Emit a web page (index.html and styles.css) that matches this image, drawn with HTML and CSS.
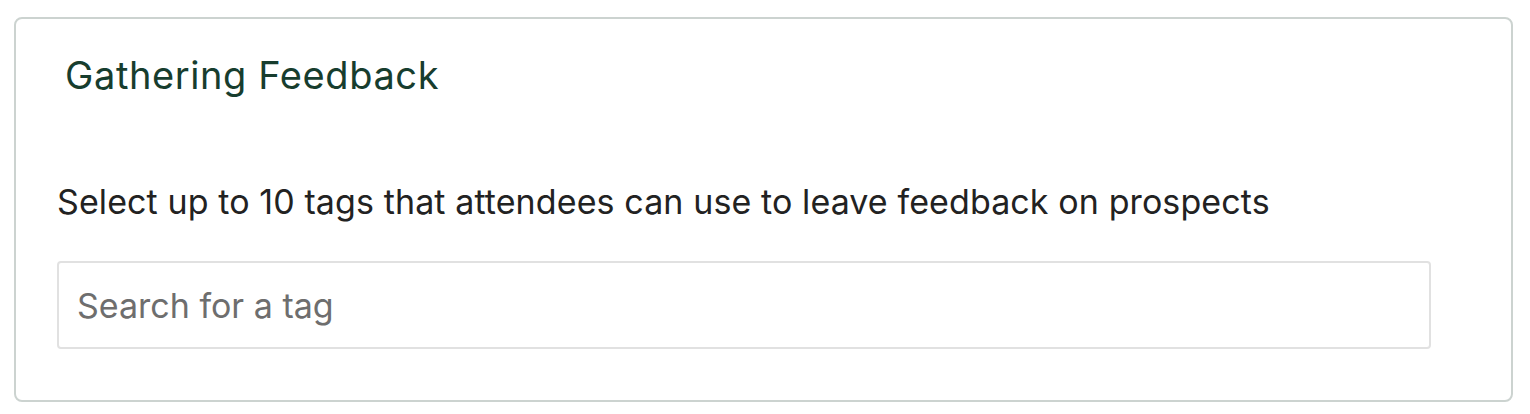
FILE: index.html
```html
<!DOCTYPE html>
<html lang="en">
  <head>
    <meta charset="UTF-8" />
    <meta name="viewport" content="width=device-width, initial-scale=1.0" />
    <title>Gathering Feedback</title>
    <link rel="stylesheet" href="styles.css">
  </head>
  <body>
    <div class="feedbackCard">
      <h2 class="feedbackTitle">Gathering Feedback</h2>
      <p class="feedbackHint">Select up to 10 tags that attendees can use to leave feedback on prospects</p>
      <input type="text" class="tagSearch" placeholder="Search for a tag" />
    </div>
  </body>
</html>
```

FILE: styles.css
```css
body {
  margin: 0;
  padding: 17px 17px 0 14px;
  background-color: #ffffff;
  font-family: Inter, "Liberation Sans", sans-serif;
}
.feedbackCard {
  height: 385px;
  box-sizing: border-box;
  border: 2px solid #ccd3d0;
  border-radius: 8px;
  padding: 0 80px 0 41px;
}
.feedbackTitle {
  margin: 32px 0 0 8px;
  font-size: 38px;
  font-weight: 400;
  line-height: 48px;
  letter-spacing: 0.6px;
  color: #173d2e;
}
.feedbackHint {
  margin: 83px 0 0;
  font-size: 34px;
  line-height: 40px;
  letter-spacing: 0.1px;
  color: #222222;
}
.tagSearch {
  display: block;
  width: 100%;
  height: 88px;
  box-sizing: border-box;
  margin-top: 39px;
  padding: 0 18px;
  border: 2px solid #e1e1e1;
  border-radius: 4px;
  font-family: inherit;
  font-size: 34px;
  color: #222222;
}
.tagSearch::placeholder {
  color: #6e6e6e;
}
```
